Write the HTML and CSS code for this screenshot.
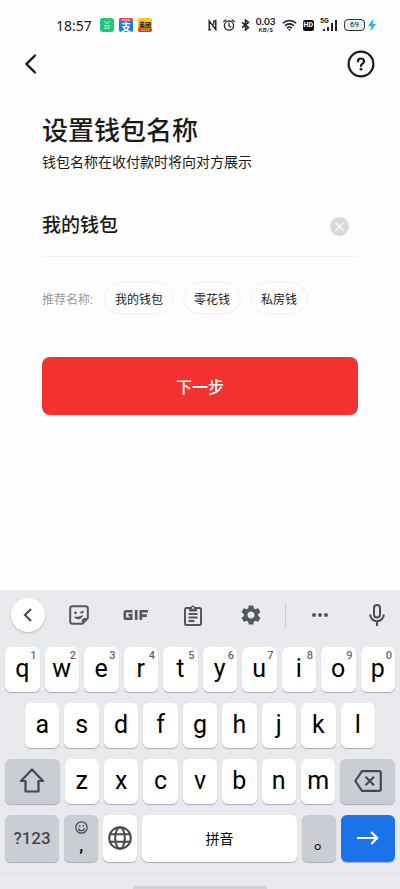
FILE: index.html
```
<!DOCTYPE html>
<html lang="zh-CN">
<head>
    <meta charset="UTF-8">
    <meta name="viewport" content="width=device-width, initial-scale=1.0">
    <title>设置钱包名称</title>
    <link rel="stylesheet" href="styles.css">
</head>
<body>
    <div class="status-bar">
        <span class="clock">18:57</span>
        <div class="app-icons">
            <svg width="14" height="14" viewBox="0 0 14 14">
                <rect width="14" height="14" rx="3" fill="#20c57c"/>
                <path d="M4.300 3c.5 2.800 4.900 2.800 5.400 0" fill="none" stroke="#dff8ec"/>
                <path d="M4.500 7h2v1.500h-2zM7.500 7h2v1.500h-2zM4.500 9.500h2V11h-2zM7.500 9.500h2V11h-2z" fill="#c8f2dd"/>
            </svg>
            <svg width="14" height="14" viewBox="0 0 14 14">
                <rect width="14" height="14" rx="2" fill="#1677e8"/>
                <path d="M0 4V2a2 2 0 0 1 2-2h10a2 2 0 0 1 2 2v2z" fill="#e0474f"/>
                <path d="M3 2h8" stroke="#ffd9d0" stroke-width="1.500" stroke-dasharray="1.500 .5"/>
                <text x="7" y="12.500" text-anchor="middle" class="app-zhi">支</text>
            </svg>
            <svg width="14" height="14" viewBox="0 0 14 14">
                <rect width="14" height="14" rx="2" fill="#ffc81e"/>
                <path d="M0 10.500h14V12a2 2 0 0 1-2 2H2a2 2 0 0 1-2-2z" fill="#e5321f"/>
                <path d="M3 12.200h8" stroke="#ffd05a" stroke-dasharray="1.500 .7"/>
                <text x="7" y="8.500" text-anchor="middle" class="app-mei">美团</text>
            </svg>
        </div>
        <div class="status-right">
            <svg width="9" height="12" viewBox="0 0 9 12" fill="none" stroke="#222" stroke-width="1.400">
                <path d="M3.200 10.300 1.200 11V2l6.600 8.500V1.500l-2 .7v3.500"/>
            </svg>
            <svg width="12" height="12" viewBox="0 0 12 12" fill="none" stroke="#222" stroke-width="1.300" stroke-linecap="round">
                <circle cx="6" cy="6.600" r="4.600"/>
                <path d="M6 4.200v2.600l1.600 1M.8 2.600 2.800.9M11.200 2.600 9.200.9"/>
            </svg>
            <svg width="9" height="12" viewBox="0 0 9 12" fill="none" stroke="#222" stroke-width="1.500">
                <path d="M1 3.300 7.500 8.600 4.500 11V1l3 2.400L1 8.700"/>
            </svg>
            <span class="net-speed"><b>0.03</b><small>KB/S</small></span>
            <svg width="15" height="12" viewBox="0 0 15 12" fill="none" stroke="#222" stroke-width="1.600">
                <path d="M.8 4.300a9.400 9.400 0 0 1 13.400 0M3 6.800a6.300 6.300 0 0 1 9 0M5.100 9.100a3.400 3.400 0 0 1 4.800 0"/>
                <path d="m7.500 12-1.600-1.700h3.200z" fill="#222" stroke="none"/>
            </svg>
            <span class="hd">HD</span>
            <span class="signal">
                <small>5G</small>
                <svg width="16" height="12" viewBox="0 0 16 12" fill="#222">
                    <path d="M1 10h2v2H1zM5 8h2v4H5zM9 4h2v8H9zM13 1h2v11h-2z"/>
                </svg>
            </span>
            <span class="power">
                <span class="battery">69</span>
                <svg width="8" height="12" viewBox="0 0 8 12"><path d="M5 0 0 7h3.200L2.600 12 8 5H4.700z" fill="#18b8ee"/></svg>
            </span>
        </div>
    </div>

    <header class="nav-bar">
        <button class="icon-btn" aria-label="返回">
            <svg width="14" height="22" viewBox="0 0 14 22" fill="none" stroke="#1a1a1a" stroke-width="2.400" stroke-linecap="round">
                <path d="m11 2.500-8.500 8.500 8.500 8.500"/>
            </svg>
        </button>
        <button class="icon-btn" aria-label="帮助">
            <svg width="28" height="28" viewBox="0 0 28 28" fill="none" stroke="#1a1a1a" stroke-width="2.200" stroke-linecap="round">
                <circle cx="14" cy="14" r="12.400"/>
                <path d="M11 11.500c0-4 6-4 6 0 0 2.200-3 2.200-3 4.500"/>
                <circle cx="14" cy="19.200" r="1.400" fill="#1a1a1a" stroke="none"/>
            </svg>
        </button>
    </header>

    <main class="content">
        <h1>设置钱包名称</h1>
        <p class="subtitle">钱包名称在收付款时将向对方展示</p>

        <div class="name-field">
            <input type="text" id="wallet-name" value="我的钱包" aria-label="钱包名称">
            <button class="icon-btn" id="clear" aria-label="清除">
                <svg width="19" height="19" viewBox="0 0 19 19">
                    <circle cx="9.500" cy="9.500" r="9.500" fill="#d9d9d9"/>
                    <path d="m6 6 7 7M13 6l-7 7" stroke="#fff" stroke-width="1.300" stroke-linecap="round"/>
                </svg>
            </button>
        </div>

        <div class="suggestions">
            <span class="label">推荐名称:</span>
            <button class="chip">我的钱包</button>
            <button class="chip">零花钱</button>
            <button class="chip">私房钱</button>
        </div>

        <button class="next-btn">下一步</button>
    </main>

    <section class="keyboard">
        <div class="toolbar">
            <button class="tool round" aria-label="收起">
                <svg width="34" height="34" viewBox="0 0 34 34" fill="none" stroke="#4a4d51" stroke-width="2.200"><path d="m20 11-6 6 6 6"/></svg>
            </button>
            <button class="tool" aria-label="贴纸">
                <svg width="20" height="20" viewBox="0 0 20 20" fill="none" stroke="#54575b" stroke-width="2">
                    <path d="M3.500 1.200h13a2.300 2.300 0 0 1 2.300 2.300v9.800l-5.500 5.500H3.500a2.300 2.300 0 0 1-2.300-2.300v-13a2.300 2.300 0 0 1 2.300-2.300z"/>
                    <path d="M18.500 13.500h-3.200a2 2 0 0 0-2 2v3.200l5.200-5.200z" fill="#54575b" stroke-width="1"/>
                    <circle cx="6.500" cy="7.800" r="1.400" fill="#54575b" stroke="none"/>
                    <path d="M11.500 7.800 14.500 6.500"/>
                    <path d="M5 11.500c3 .6 6 .1 9-1.500-.5 5-7.500 5.500-9 1.500z" fill="#54575b" stroke="none"/>
                </svg>
            </button>
            <button class="tool" aria-label="GIF">
                <svg width="26" height="12" viewBox="0 0 26 12" fill="none" stroke="#54575b" stroke-width="2.600">
                    <path d="M9.500 2.200H3.200q-1.400 0-1.400 1.400v4.800q0 1.400 1.400 1.400h5V6H5.500M13.200 1v10M17.800 11V2.200H25M17.800 6.600h6"/>
                </svg>
            </button>
            <button class="tool" aria-label="剪贴板">
                <svg width="18" height="21" viewBox="0 0 18 21" fill="none" stroke="#54575b" stroke-width="2">
                    <rect x="1" y="3" width="16" height="17" rx="1.500"/>
                    <path d="M4.500 9h9M4.500 12.500h9M4.500 16h6" stroke-width="1.800"/>
                    <path d="M5 2.500h2a2 2 0 0 1 4 0h2v4H5z" fill="#54575b" stroke="none"/>
                    <circle cx="9" cy="3" r="1" fill="#e8eaed" stroke="none"/>
                </svg>
            </button>
            <button class="tool" aria-label="设置">
                <svg width="20" height="20" viewBox="2 2 20 20" fill="#54575b">
                    <path d="M19.140 12.940c.04-.3.060-.61.060-.94 0-.32-.02-.64-.07-.94l2.030-1.580c.18-.14.230-.41.120-.61l-1.920-3.320c-.12-.22-.37-.29-.59-.22l-2.390.96c-.5-.38-1.030-.7-1.620-.94l-.36-2.540c-.04-.24-.24-.41-.48-.41h-3.840c-.24 0-.43.170-.47.410l-.36 2.540c-.59.240-1.130.570-1.620.94l-2.390-.96c-.22-.08-.47 0-.59.220L2.740 8.870c-.12.210-.08.470.12.610l2.030 1.580c-.05.3-.09.630-.09.940s.02.640.07.940l-2.030 1.580c-.18.140-.23.410-.12.610l1.920 3.320c.12.220.37.290.59.220l2.390-.96c.5.380 1.030.7 1.620.94l.36 2.540c.05.240.24.410.48.410h3.840c.24 0 .44-.17.470-.41l.36-2.540c.59-.24 1.130-.56 1.620-.94l2.390.96c.22.080.47 0 .59-.22l1.920-3.320c.12-.22.070-.47-.12-.61l-2.010-1.580zM12 15.600c-1.980 0-3.600-1.620-3.600-3.600s1.620-3.600 3.600-3.600 3.600 1.620 3.600 3.600-1.620 3.600-3.600 3.600z"/>
                </svg>
            </button>
            <span class="separator"></span>
            <button class="tool" aria-label="更多">
                <svg width="18" height="6" viewBox="0 0 18 6" fill="#54575b"><circle cx="3" cy="3" r="2"/><circle cx="9" cy="3" r="2"/><circle cx="15" cy="3" r="2"/></svg>
            </button>
            <button class="tool" aria-label="语音输入">
                <svg width="16" height="22" viewBox="0 0 16 22" fill="none" stroke="#4a4d51" stroke-width="2">
                    <rect x="5" y="1" width="6" height="12.500" rx="3"/>
                    <path d="M1.200 10.500a6.800 6.800 0 0 0 13.600 0M8 17.300V22"/>
                </svg>
            </button>
        </div>

        <div class="keys">
            <div class="key-row">
                <button class="key">q<sup>1</sup></button>
                <button class="key">w<sup>2</sup></button>
                <button class="key">e<sup>3</sup></button>
                <button class="key">r<sup>4</sup></button>
                <button class="key">t<sup>5</sup></button>
                <button class="key">y<sup>6</sup></button>
                <button class="key">u<sup>7</sup></button>
                <button class="key">i<sup>8</sup></button>
                <button class="key">o<sup>9</sup></button>
                <button class="key">p<sup>0</sup></button>
            </div>
            <div class="key-row inset">
                <button class="key">a</button>
                <button class="key">s</button>
                <button class="key">d</button>
                <button class="key">f</button>
                <button class="key">g</button>
                <button class="key">h</button>
                <button class="key">j</button>
                <button class="key">k</button>
                <button class="key">l</button>
            </div>
            <div class="key-row">
                <button class="key wide dark" aria-label="Shift">
                    <svg width="26" height="25" viewBox="0 0 26 25" fill="none" stroke="#45484c" stroke-width="2.200" stroke-linejoin="round">
                        <path d="M13 1.500 24 13h-4.500v10.500h-13V13H2z"/>
                    </svg>
                </button>
                <button class="key">z</button>
                <button class="key">x</button>
                <button class="key">c</button>
                <button class="key">v</button>
                <button class="key">b</button>
                <button class="key">n</button>
                <button class="key">m</button>
                <button class="key wide dark" aria-label="删除">
                    <svg width="28" height="22" viewBox="0 0 28 22" fill="none" stroke="#45484c" stroke-width="2.200" stroke-linejoin="round">
                        <path d="M8 1.200h17q1.800 0 1.800 1.800v16q0 1.800-1.800 1.800H8L1.300 11z"/>
                        <path d="m11.500 6.800 8.500 8.400M20 6.800l-8.500 8.400"/>
                    </svg>
                </button>
            </div>
            <div class="key-row bottom">
                <button class="key wide dark symbols">?123</button>
                <button class="key dark comma" aria-label="逗号">
                    <svg width="13" height="13" viewBox="0 0 13 13" fill="none" stroke="#45484c" stroke-width="1.200">
                        <circle cx="6.500" cy="6.500" r="5.700"/>
                        <path d="M3.500 7.500c.8 3 5.200 3 6 0"/>
                        <path d="M4 4.200h1.400v1.500H4zM7.700 4.200h1.400v1.500H7.700z" fill="#45484c" stroke="none"/>
                    </svg>
                    <span>,</span>
                </button>
                <button class="key" aria-label="切换语言">
                    <svg width="24" height="24" viewBox="0 0 24 24" fill="none" stroke="#45484c" stroke-width="2">
                        <circle cx="12" cy="12" r="10.800"/>
                        <ellipse cx="12" cy="12" rx="4.800" ry="10.800"/>
                        <path d="M2 8.300h20M2 15.700h20"/>
                    </svg>
                </button>
                <button class="key space">拼音</button>
                <button class="key dark" aria-label="句号">
                    <span class="period">。</span>
                </button>
                <button class="key wide enter" aria-label="完成">
                    <svg width="22" height="14" viewBox="0 0 22 14" fill="none" stroke="#fff" stroke-width="2.200">
                        <path d="M0 7h20M14.200 1l6 6-6 6"/>
                    </svg>
                </button>
            </div>
        </div>
        <div class="home-bar"><span></span></div>
    </section>

    <script>
        const nameInput = document.getElementById("wallet-name");

        document.getElementById("clear").onclick = () => {
            nameInput.value = "";
            nameInput.focus();
        };

        document.querySelectorAll(".chip").forEach(chip => {
            chip.onclick = () => nameInput.value = chip.innerText;
        });
    </script>
</body>
</html>
```
FILE: styles.css
```
* {
    box-sizing: border-box;
}
body {
    display: flex;
    flex-direction: column;
    min-height: 100vh;
    margin: 0;
    background-color: #fefefe;
    color: #1a1a1a;
    font-family: Roboto, "Noto Sans CJK SC", sans-serif;
}
button {
    padding: 0;
    border: none;
    background: none;
    color: inherit;
    font-family: inherit;
    cursor: pointer;
}
svg {
    display: block;
    flex-shrink: 0;
}

/* Barre d'état */
.status-bar {
    display: flex;
    align-items: center;
    height: 50px;
    padding: 0 24px 0 56px;
}
.clock {
    font-family: "Noto Sans", sans-serif;
    font-size: 14px;
}
.app-icons {
    display: flex;
    gap: 5px;
    margin-left: 8px;
}
.app-zhi {
    fill: white;
    font-size: 10px;
    font-weight: bold;
}
.app-mei {
    fill: #222;
    font-size: 6px;
    font-weight: 900;
}
.status-right {
    display: flex;
    align-items: center;
    gap: 6px;
    margin-left: auto;
}
.net-speed {
    display: flex;
    flex-direction: column;
    align-items: center;
    font-family: Lato, sans-serif;
}
.net-speed b {
    font-size: 10px;
    line-height: 10px;
}
.net-speed small {
    font-size: 6px;
    font-weight: bold;
    line-height: 8px;
}
.hd {
    padding: 0 1px;
    border-radius: 2px;
    background-color: #111;
    color: white;
    font-size: 7px;
    font-weight: bold;
    line-height: 11px;
}
.signal {
    position: relative;
    padding-left: 2px;
}
.signal small {
    position: absolute;
    top: -1px;
    left: 0;
    font-size: 7px;
    font-weight: bold;
    line-height: 7px;
}
.power {
    display: flex;
    align-items: center;
    gap: 3px;
}
.battery {
    width: 21px;
    border: 1px solid #333;
    border-radius: 4px;
    background-color: #e4f2f7;
    font-size: 8px;
    line-height: 10px;
    text-align: center;
}

.nav-bar {
    display: flex;
    justify-content: space-between;
    align-items: center;
    padding: 0 25px 0 24px;
}

.content {
    padding: 34px 42px 0;
}
h1 {
    margin: 0;
    font-size: 26px;
    font-weight: 500;
    line-height: 38px;
}
.subtitle {
    margin: 0;
    font-size: 14px;
    line-height: 24px;
}
.name-field {
    display: flex;
    align-items: center;
    margin-top: 22px;
    padding: 10px 9px 10px 0;
    border-bottom: 1px solid #f2f2f2;
}
.name-field input {
    flex: 1;
    min-width: 0;
    padding: 0;
    border: none;
    outline: none;
    background: none;
    color: #1a1a1a;
    font-family: inherit;
    font-size: 19px;
    font-weight: 500;
    line-height: 40px;
}
.suggestions {
    display: flex;
    flex-wrap: wrap;
    align-items: center;
    gap: 9px;
    margin-top: 25px;
}
.label {
    margin-right: 2px;
    color: #999;
    font-size: 12px;
}
.chip {
    height: 32px;
    padding: 0 10px;
    border: 1px solid #f2f2f2;
    border-radius: 16px;
    font-size: 12px;
}
.next-btn {
    width: 100%;
    height: 58px;
    margin-top: 43px;
    border-radius: 8px;
    background-color: #f33131;
    color: white;
    font-size: 16px;
    font-weight: 500;
}

/* Clavier */
.keyboard {
    margin-top: auto;
    background-color: #e8eaed;
}
.toolbar {
    display: flex;
    gap: 11px;
    align-items: center;
    height: 50px;
    padding-left: 11px;
}
.tool {
    display: flex;
    flex: 1;
    justify-content: center;
}
.round {
    flex: none;
    border-radius: 50%;
    background-color: white;
    box-shadow: 0 1px 2px #bbb;
}
.separator {
    width: 1px;
    height: 25px;
    background-color: #cbcdd1;
}
.keys {
    display: flex;
    flex-direction: column;
    gap: 11px;
    padding: 7px 5px 11px;
}
.key-row {
    display: flex;
    gap: 5px;
    height: 45px;
}
.inset {
    padding: 0 20px;
}
.bottom {
    height: 47px;
}
.key {
    position: relative;
    display: flex;
    flex: 34 1 0;
    justify-content: center;
    align-items: center;
    padding-bottom: 2px;
    border-radius: 6px;
    background-color: white;
    box-shadow: 0 1px 1px #a9abaf;
    color: black;
    font-size: 25px;
}
.key sup {
    position: absolute;
    top: 3px;
    right: 3px;
    color: #66696d;
    font-size: 11px;
    font-weight: 500;
    line-height: 11px;
}
.wide {
    flex-grow: 54;
}
.dark {
    background-color: #cbcdd5;
}
.symbols {
    color: #45484c;
    font-size: 17px;
    font-weight: 500;
}
.comma {
    flex-direction: column;
    font-size: 20px;
    line-height: 20px;
}
.space {
    flex-grow: 154;
    font-size: 14px;
}
.period {
    padding: 8px 0 0 10px;
    font-size: 20px;
    line-height: 20px;
}
.enter {
    background-color: #1a73e8;
}
.home-bar {
    display: flex;
    justify-content: center;
    align-items: flex-end;
    height: 16px;
    border-top: 1px solid #dddfe2;
}
.home-bar span {
    width: 134px;
    height: 3px;
    border-radius: 2px 2px 0 0;
    background-color: #d2d3d7;
}
```
